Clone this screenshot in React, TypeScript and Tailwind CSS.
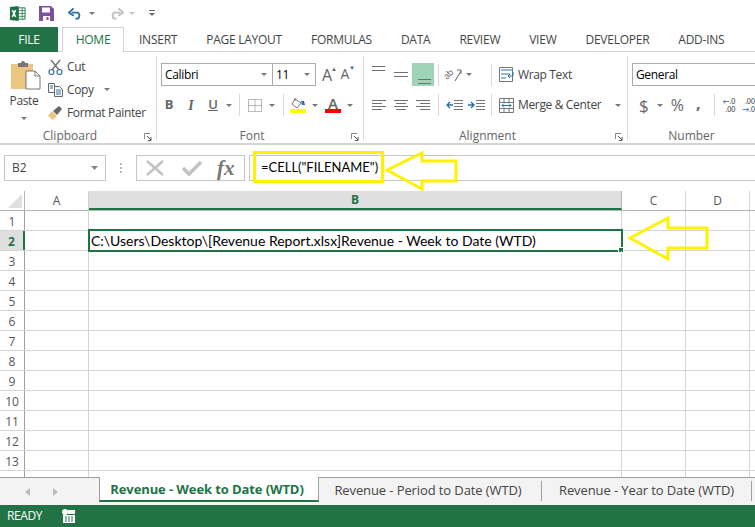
import type { ReactNode } from 'react';

const ui = 'font-["Open_Sans","Noto_Sans",sans-serif]';

const Caret = ({ className = '' }: { className?: string }) => (
  <svg width="6" height="3" viewBox="0 0 6 3" className={`shrink-0 ${className}`}>
    <path d="M0 0h6L3 3z" fill="#777" />
  </svg>
);

const Launcher = () => (
  <svg width="8" height="8" viewBox="0 0 8 8" className="shrink-0">
    <path d="M.5 6V.5H6" fill="none" stroke="#888" />
    <path d="M3 3l4 4M7 4v3.500H4" fill="none" stroke="#555" />
  </svg>
);

const Lines = ({ rows }: { rows: [number, number, number][] }) => (
  <svg width="16" height="14" viewBox="0 0 16 14">
    {rows.map(([y, a, b]) => (
      <path key={y} d={`M${a} ${y}.5H${b}`} stroke="#6f6f6f" />
    ))}
  </svg>
);

const Sep = ({ className = '' }: { className?: string }) => <div className={`w-px h-[22px] bg-[#d8d8d8] shrink-0 ${className}`} />;

const Group = ({ width, label, children }: { width: string; label: string; children: ReactNode }) => (
  <section className={`${width} shrink-0 h-[84px] flex flex-col border-r border-[#d8d8d8] tracking-[-0.35px]`}>
    <div className="h-[76px] shrink-0 flex flex-col">{children}</div>
    <div className="relative h-[8px] shrink-0 flex items-center justify-center pr-[16px] text-xs text-[#666] tracking-normal">
      {label}
      <span className="absolute right-[4px] top-[1px]">
        <Launcher />
      </span>
    </div>
  </section>
);

const tabs = ['INSERT', 'PAGE LAYOUT', 'FORMULAS', 'DATA', 'REVIEW', 'VIEW', 'DEVELOPER', 'ADD-INS'];
const tabGaps = ['ml-[15px]', 'ml-[29px]', 'ml-[29px]', 'ml-[29px]', 'ml-[29px]', 'ml-[29px]', 'ml-[29px]', 'ml-[29px]'];
const colHeads = [
  { name: 'A', w: 'w-16', on: false },
  { name: 'B', w: 'w-[533px]', on: true },
  { name: 'C', w: 'w-16', on: false },
  { name: 'D', w: 'w-16', on: false },
];

const QuickAccess = () => (
  <div className="h-[27px] flex items-center">
    <svg width="17" height="17" viewBox="0 0 18 18" className="ml-[9px]">
      <path d="M7 3h10v12H7z" fill="#fff" stroke="#217346" />
      <path d="M10 3v12M14 3v12M7 6h10M7 9h10M7 12h10" stroke="#217346" strokeWidth=".8" />
      <path d="M1 2l9-1v16l-9-1z" fill="#217346" />
      <path d="M3.500 5.500l3.500 7M7 5.500l-3.500 7" stroke="#fff" strokeWidth="1.600" />
    </svg>
    <svg width="15" height="15" viewBox="0 0 15 15" className="ml-[13px]">
      <path d="M0 0h12l3 3v12H0z" fill="#7d4f9f" />
      <path d="M3 1.500h8v5H3z" fill="#fff" />
      <path d="M4 10h7v5H4z" fill="#fff" />
      <path d="M7.500 11h2v3h-2z" fill="#7d4f9f" />
    </svg>
    <svg width="15" height="13" viewBox="0 0 16 13" className="ml-[14px]">
      <path d="M4 5.500h6.500a4 4 0 0 1 0 6.500H8" fill="none" stroke="#2f6ea5" strokeWidth="2" />
      <path d="M6 1L1 5.500 6 9" fill="none" stroke="#2f6ea5" strokeWidth="2" />
    </svg>
    <Caret className="ml-[6px]" />
    <svg width="15" height="13" viewBox="0 0 16 13" className="ml-[14px]">
      <path d="M12 5.500H5.500a4 4 0 0 0 0 6.500H8" fill="none" stroke="#bdbdbd" strokeWidth="2" />
      <path d="M10 1l5 4.500L10 9" fill="none" stroke="#bdbdbd" strokeWidth="2" />
    </svg>
    <svg width="6" height="3" viewBox="0 0 6 3" className="ml-[5px]">
      <path d="M0 0h6L3 3z" fill="#c4c4c4" />
    </svg>
    <svg width="6" height="7" viewBox="0 0 6 7" className="ml-[14px]">
      <path d="M0 .5h6" stroke="#666" />
      <path d="M0 3h6L3 6z" fill="#666" />
    </svg>
  </div>
);

const TabRow = () => (
  <div className={`relative h-[25px] flex items-end text-xs tracking-[-0.25px] ${ui}`}>
    <div className="absolute left-0 right-0 bottom-0 h-px bg-[#d4d4d4]" />
    <div className="relative w-[58px] h-[25px] bg-[#217346] text-white flex items-center justify-center">FILE</div>
    <div className="relative ml-1 w-[62px] h-[25px] bg-white border border-b-0 border-[#d4d4d4] text-[#217346] flex items-center justify-center">HOME</div>
    {tabs.map((t, i) => (
      <div key={t} className={`relative h-[25px] flex items-center text-[#444] ${tabGaps[i]}`}>
        {t}
      </div>
    ))}
  </div>
);

const Clipboard = () => (
  <Group width="w-[157px]" label="Clipboard">
    <div className="flex h-full">
      <div className="w-[48px] flex flex-col items-center pt-[4px]">
        <svg width="30" height="30" viewBox="0 0 30 30" className="ml-[3px]">
          <path d="M0 4h22v25H0z" fill="#ecc681" />
          <path d="M7 3h3a2 2 0 0 1 4 0h3v4H7z" fill="#777" />
          <path d="M15 11h9l5 5v13H15z" fill="#fff" stroke="#777" />
          <path d="M24 11v5h5" fill="none" stroke="#777" />
        </svg>
        <div className="mt-[3px] text-xs text-[#444] leading-4">Paste</div>
        <Caret className="mt-[8px]" />
      </div>
      <div className="flex flex-col text-xs text-[#444] -mt-px">
        <div className="h-[23px] flex items-center gap-[4px]">
          <svg width="15" height="16" viewBox="0 0 15 16">
            <path d="M3 1l8 10M12 1L4 11" stroke="#777" strokeWidth="1.500" />
            <circle cx="3.500" cy="13" r="2.500" fill="none" stroke="#2f6ea5" strokeWidth="1.200" />
            <circle cx="11.500" cy="13" r="2.500" fill="none" stroke="#2f6ea5" strokeWidth="1.200" />
          </svg>
          Cut
        </div>
        <div className="h-[23px] flex items-center gap-[4px]">
          <svg width="15" height="15" viewBox="0 0 15 15">
            <path d="M.5 1.500h6v9h-6z" fill="#fff" stroke="#666" />
            <path d="M6.500 4.500h5l3 3v7h-8z" fill="#fff" stroke="#666" />
            <path d="M8 8h5M8 10h5M8 12h5M2 4h3M2 6h3" stroke="#2f6ea5" />
          </svg>
          Copy
          <Caret className="ml-[6px]" />
        </div>
        <div className="h-[23px] flex items-center gap-[4px]">
          <svg width="15" height="15" viewBox="0 0 15 15">
            <path d="M0 11l4-5 5 5-4 4z" fill="#ecc681" />
            <path d="M5 6l6-5 3 3-5 6z" fill="#666" />
          </svg>
          Format Painter
        </div>
      </div>
    </div>
  </Group>
);

const Font = () => (
  <Group width="w-[207px]" label="Font">
    <div className="flex items-center pt-[7px] pl-[4px]">
      <div className="w-[112px] h-[23px] border border-[#ababab] flex items-center justify-between pl-[3px] pr-[5px] text-xs text-black">
        Calibri
        <Caret />
      </div>
      <div className="w-[43px] h-[23px] border border-l-0 border-[#ababab] flex items-center justify-between pl-[3px] pr-[5px] text-xs text-black">
        11
        <Caret />
      </div>
      <div className="ml-[5px] flex text-[16px] text-[#666] gap-[6px] leading-none tracking-normal">
        <span className="relative w-[12px] text-center">
          A<span className="absolute right-[-4px] top-[-1px] text-[6px] text-[#666]">▲</span>
        </span>
        <span className="relative w-[12px] text-center text-[14px]">
          A<span className="absolute right-[-4px] top-[-2px] text-[6px] text-[#2f6ea5]">▼</span>
        </span>
      </div>
    </div>
    <div className="flex items-center mt-[8px] pl-[7px] h-[22px] text-[#666] tracking-normal">
      <span className="w-[10px] text-[13px] font-bold text-center">B</span>
      <span className="ml-[12px] w-[10px] text-[14px] italic font-semibold text-center font-['Liberation_Serif',serif]">I</span>
      <span className="ml-[12px] w-[10px] text-[13px] font-semibold underline text-center">U</span>
      <Caret className="ml-[8px]" />
      <Sep className="ml-[7px]" />
      <svg width="14" height="13" viewBox="0 0 14 13" className="ml-[8px]">
        <path d="M.5.500h13v12H.5zM7 .5v12M.5 6.500h13" fill="none" stroke="#777" strokeDasharray="1 1" />
      </svg>
      <Caret className="ml-[7px]" />
      <Sep className="ml-[8px]" />
      <div className="ml-[6px] flex flex-col items-center w-4">
        <svg width="16" height="11" viewBox="0 0 16 11">
          <path d="M5 1l6 4-4 5-5-4z" fill="#fff" stroke="#777" />
          <path d="M5 0v3" stroke="#777" />
          <path d="M11 3h3l1 4-3 0z" fill="#2f6ea5" />
        </svg>
        <div className="w-4 h-[4px] bg-[#ffff00]" />
      </div>
      <Caret className="ml-[6px]" />
      <div className="ml-[7px] flex flex-col items-center w-4">
        <span className="text-[15px] font-semibold leading-[11px] text-[#666]">A</span>
        <div className="w-4 h-[4px] bg-[#ff0000]" />
      </div>
      <Caret className="ml-[6px]" />
    </div>
  </Group>
);

const Alignment = () => (
  <Group width="w-[264px]" label="Alignment">
    <div className="flex items-center pt-[7px] pl-[8px] h-[30px]">
      <div className="w-[22px] -mt-[8px]"><Lines rows={[[2, 0, 13], [6, 0, 13]]} /></div>
      <div className="w-[22px]"><Lines rows={[[4, 0, 14], [8, 0, 14]]} /></div>
      <div className="-ml-[4px] w-[22px] h-[23px] bg-[#9fd5b7] flex items-end justify-center">
        <Lines rows={[[7, 3, 17], [11, 3, 17]]} />
      </div>
      <Sep className="ml-[4px]" />
      <svg width="17" height="15" viewBox="0 0 17 15" className="ml-[7px] overflow-visible">
        <text x="1" y="13" fontSize="9" fill="#666" transform="rotate(-45 1 13)">ab</text>
        <path d="M9 14l6-10M11 3h4v4" fill="none" stroke="#666" />
      </svg>
      <Caret className="ml-[3px]" />
      <Sep className="ml-[19px]" />
      <div className="ml-[7px] flex items-center text-xs text-[#444] gap-[4px] h-[23px]">
        <svg width="15" height="15" viewBox="0 0 15 15">
          <path d="M.5.500h13v14H.5z" fill="#fff" stroke="#777" />
          <path d="M2 3h11M2 7h9M2 11h5" stroke="#2f6ea5" />
          <path d="M14 5v4H9l2-2M9 9l2 2" fill="none" stroke="#2f6ea5" />
        </svg>
        Wrap Text
      </div>
    </div>
    <div className="flex items-center mt-[8px] pl-[8px] h-[22px]">
      <div className="w-[22px]"><Lines rows={[[2, 0, 14], [5, 0, 10], [8, 0, 14], [11, 0, 10]]} /></div>
      <div className="w-[22px]"><Lines rows={[[2, 0, 14], [5, 2, 12], [8, 0, 14], [11, 2, 12]]} /></div>
      <div className="w-[22px]"><Lines rows={[[2, 0, 14], [5, 4, 14], [8, 0, 14], [11, 4, 14]]} /></div>
      <Sep />
      <svg width="17" height="12" viewBox="0 0 17 12" className="ml-[7px]">
        <path d="M8 1.500h9M8 4.500h9M8 7.500h9M8 10.500h9" stroke="#777" />
        <path d="M7 6H1M4 3L1 6l3 3" fill="none" stroke="#2f6ea5" strokeWidth="1.400" />
      </svg>
      <svg width="17" height="12" viewBox="0 0 17 12" className="ml-[5px]">
        <path d="M8 1.500h9M8 4.500h9M8 7.500h9M8 10.500h9" stroke="#777" />
        <path d="M0 6h6M3 3l3 3-3 3" fill="none" stroke="#2f6ea5" strokeWidth="1.400" />
      </svg>
      <Sep className="ml-[6px]" />
      <div className="ml-[7px] flex items-center text-xs text-[#444] gap-[4px]">
        <svg width="15" height="15" viewBox="0 0 15 15">
          <path d="M.5.500h14v14H.5z" fill="#fff" stroke="#777" />
          <path d="M.5 4.500h14M.5 10.500h14M5 .5v4M10 .5v4M5 10.500v4M10 10.500v4" stroke="#777" />
          <path d="M3 7.500h9M5 5.500l-2 2 2 2M10 5.500l2 2-2 2" fill="none" stroke="#2f6ea5" />
        </svg>
        Merge &amp; Center
        <Caret className="ml-[10px]" />
      </div>
    </div>
  </Group>
);

const NumberGroup = () => (
  <section className="flex-1 min-w-0 h-[84px] flex flex-col">
    <div className="h-[76px] shrink-0 flex flex-col overflow-hidden">
      <div className="pt-[7px] pl-[4px]">
        <div className="w-[140px] h-[23px] border border-[#ababab] flex items-center pl-[3px] text-xs text-black tracking-[-0.35px]">General</div>
      </div>
      <div className="flex items-center mt-[8px] pl-[11px] h-[22px] text-[#666]">
        <span className="text-[17px] leading-none">$</span>
        <Caret className="ml-[8px]" />
        <span className="ml-[8px] text-[16px] leading-none">%</span>
        <span className="ml-[12px] text-[16px] font-bold leading-none pb-[4px]">,</span>
        <Sep className="ml-[13px]" />
        <div className="ml-[7px] w-[16px] text-[7px] leading-[8.500px] text-[#555] text-right font-semibold font-['Lato',sans-serif]">
          <div><span className="text-[#2f6ea5]">←</span>.0</div>
          <div>.00</div>
        </div>
        <div className="ml-[6px] w-[16px] text-[7px] leading-[8.500px] text-[#555] text-right font-semibold font-['Lato',sans-serif]">
          <div>.00</div>
          <div><span className="text-[#2f6ea5]">→</span>.0</div>
        </div>
      </div>
    </div>
    <div className="h-[8px] shrink-0 flex items-center justify-center text-xs text-[#666]">Number</div>
  </section>
);

const FormulaBar = () => (
  <div className="relative h-[46px] pt-[10px] flex items-start">
    <div className="ml-[4px] w-[102px] h-[26px] border border-[#c6c6c6] flex items-center justify-between pl-[7px] pr-[7px] text-xs text-[#444]">
      B2
      <svg width="7" height="4" viewBox="0 0 7 4"><path d="M0 0h7L3.500 4z" fill="#888" /></svg>
    </div>
    <div className="w-[30px] h-[26px] flex items-center justify-center">
      <svg width="3" height="12" viewBox="0 0 3 12">
        <path d="M0 1h2v2H0zM0 5h2v2H0zM0 9h2v2H0z" fill="#bbb" />
      </svg>
    </div>
    <div className="w-[109px] h-[26px] border border-[#c6c6c6] flex items-center pl-[9px]">
      <svg width="18" height="16" viewBox="0 0 18 16">
        <path d="M1 1l16 14M17 1L1 15" stroke="#c2c2c2" strokeWidth="2.500" />
      </svg>
      <svg width="20" height="16" viewBox="0 0 20 16" className="ml-[18px]">
        <path d="M1 8l6 6L19 2" fill="none" stroke="#c2c2c2" strokeWidth="3.500" />
      </svg>
      <span className="ml-[15px] text-[21px] italic font-bold leading-none text-[#777] font-['Liberation_Serif',serif]">fx</span>
    </div>
    <div className="ml-[4px] flex-1 h-[26px] border-y border-l border-[#c6c6c6] flex items-center pl-[11px] text-[13px] text-black font-['Lato',sans-serif]">
      =CELL("FILENAME")
    </div>
    <div className="absolute left-[253px] top-[6px] w-[131px] h-[32px] border-[3px] border-[#fff200]" />
    <svg width="76" height="40" viewBox="0 0 76 40" className="absolute left-[384px] top-[6px]">
      <path d="M3 19L38 2v8h34v20H38v8z" fill="none" stroke="#fff200" strokeWidth="3" />
    </svg>
  </div>
);

const Row = ({ n, on = false }: { n: number; on?: boolean }) => (
  <div className="flex h-5 border-b border-[#d4d4d4]">
    <div className={`w-[25px] shrink-0 flex items-center justify-center pt-[2px] text-xs border-r ${on ? 'bg-[#dfdfdf] text-[#217346] font-bold border-r-2 border-[#217346]' : 'text-[#555] border-[#9f9f9f]'}`}>
      {n}
    </div>
    <div className="w-16 shrink-0 border-r border-[#d4d4d4]" />
    <div className="relative w-[533px] shrink-0 border-r border-[#d4d4d4]">
      {on && (
        <div className="absolute left-[-1px] right-[-2px] top-[-2px] bottom-[-2px] border-2 border-[#217346] flex items-center pl-[1px] text-[14px] text-black whitespace-nowrap font-['Lato',sans-serif]">
          C:\Users\Desktop\[Revenue Report.xlsx]Revenue - Week to Date (WTD)
          <div className="absolute right-[-3px] bottom-[-3px] w-[6px] h-[6px] bg-[#217346] border border-white" />
        </div>
      )}
    </div>
    <div className="w-16 shrink-0 border-r border-[#d4d4d4]" />
    <div className="w-16 shrink-0 border-r border-[#d4d4d4]" />
  </div>
);

const Sheet = () => (
  <div className={`relative flex-1 min-h-0 overflow-hidden ${ui}`}>
    <div className="flex h-5 border-b border-[#b5b5b5]">
      <div className="relative w-[25px] shrink-0 border-r border-[#b5b5b5] overflow-hidden">
        <svg width="14" height="14" viewBox="0 0 14 14" className="absolute right-[2px] bottom-[2px]">
          <path d="M14 0v14H0z" fill="#dfdfdf" />
        </svg>
      </div>
      {colHeads.map((c) => (
        <div key={c.name} className={`${c.w} shrink-0 flex items-center justify-center text-xs border-r ${c.on ? 'bg-[#dfdfdf] text-[#217346] font-bold border-b-2 border-b-[#217346] border-r-[#b5b5b5]' : 'text-[#555] border-[#d4d4d4]'}`}>
          {c.name}
        </div>
      ))}
    </div>
    {Array.from({ length: 13 }, (_, i) => (
      <Row key={i} n={i + 1} on={i === 1} />
    ))}
    <div className="flex h-full">
      <div className="w-[25px] border-r border-[#9f9f9f]" />
      <div className="w-16 border-r border-[#d4d4d4]" />
      <div className="w-[533px] border-r border-[#d4d4d4]" />
      <div className="w-16 border-r border-[#d4d4d4]" />
      <div className="w-16 border-r border-[#d4d4d4]" />
    </div>
    <svg width="84" height="46" viewBox="0 0 84 46" className="absolute left-[627px] top-[25px]">
      <path d="M3 22L41 2v10h39v20H41v11z" fill="none" stroke="#fff200" strokeWidth="3" />
    </svg>
  </div>
);

const SheetTabs = () => (
  <div className={`h-[28px] bg-[#f3f3f3] border-t border-[#9f9f9f] flex text-[13px] tracking-[-0.1px] text-[#444] ${ui}`}>
    <div className="w-[99px] shrink-0 flex items-center pl-[25px] gap-[23px]">
      <svg width="5" height="8" viewBox="0 0 5 8"><path d="M5 0v8L0 4z" fill="#bbb" /></svg>
      <svg width="5" height="8" viewBox="0 0 5 8"><path d="M0 0v8l5-4z" fill="#bbb" /></svg>
    </div>
    <div className="w-[220px] shrink-0 -mt-px h-[25px] bg-white border-x border-[#9f9f9f] border-b-2 border-b-[#217346] flex items-center justify-center pr-[4px] pt-[3px] font-bold text-[#217346]">
      Revenue - Week to Date (WTD)
    </div>
    <div className="w-[222px] shrink-0 flex items-center justify-center pr-[4px] pb-[2px]">Revenue - Period to Date (WTD)</div>
    <div className="w-px h-5 mt-[3px] bg-[#9f9f9f]" />
    <div className="w-[209px] shrink-0 flex items-center justify-center pb-[2px]">Revenue - Year to Date (WTD)</div>
    <div className="w-px h-5 mt-[3px] bg-[#9f9f9f]" />
  </div>
);

export default function App() {
  return (
    <div className={`w-[755px] h-[527px] overflow-hidden bg-white flex flex-col ${ui}`}>
      <QuickAccess />
      <TabRow />
      <div className="h-[93px] border-b-2 border-[#d4d4d4] flex pt-[4px]">
        <Clipboard />
        <Font />
        <Alignment />
        <NumberGroup />
      </div>
      <FormulaBar />
      <Sheet />
      <SheetTabs />
      <div className="h-[22px] bg-[#217346] text-white flex items-center pl-[7px] text-xs tracking-[-0.4px]">
        READY
        <svg width="14" height="14" viewBox="0 0 14 14" className="ml-[20px]">
          <circle cx="3" cy="3" r="3" fill="#fff" />
          <path d="M1 6h12v8H1z" fill="#fff" />
          <path d="M6 1h7v4H6z" fill="#fff" />
          <path d="M3 8h2M6 8h2M9 8h2M3 10h2M6 10h2M9 10h2M3 12h2M6 12h2M9 12h2" stroke="#217346" />
        </svg>
      </div>
    </div>
  );
}
